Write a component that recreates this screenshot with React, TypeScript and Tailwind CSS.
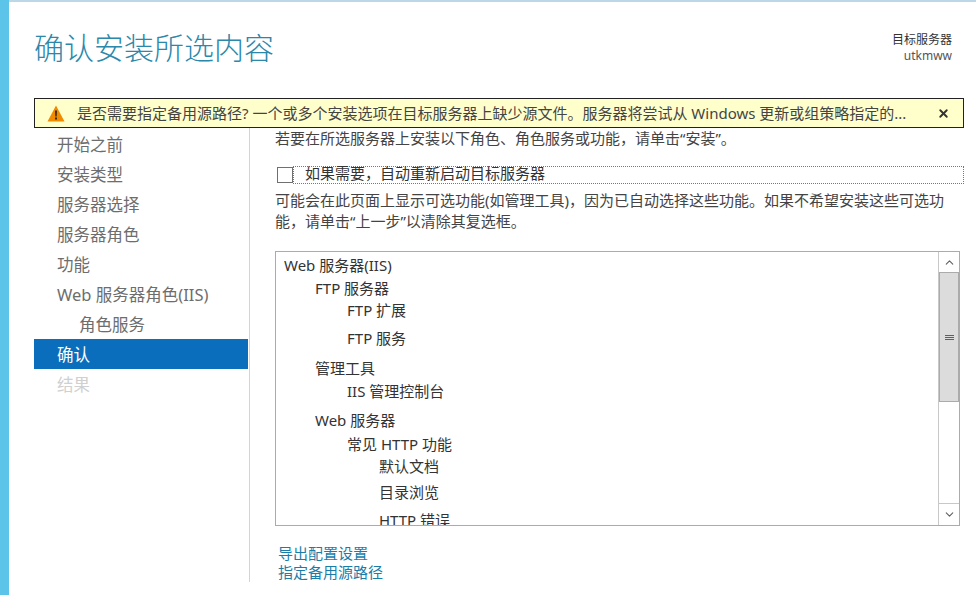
import { ChevronDown, ChevronUp, X } from 'lucide-react';

const font = 'font-["Noto_Sans","Noto_Sans_CJK_SC",sans-serif]';

const steps = [
  { label: '开始之前', cls: 'pl-[23px] text-[#6d6d6d]' },
  { label: '安装类型', cls: 'pl-[23px] text-[#6d6d6d]' },
  { label: '服务器选择', cls: 'pl-[23px] text-[#6d6d6d]' },
  { label: '服务器角色', cls: 'pl-[23px] text-[#6d6d6d]' },
  { label: '功能', cls: 'pl-[23px] text-[#6d6d6d]' },
  { label: 'Web 服务器角色(IIS)', cls: 'pl-[23px] text-[#6d6d6d]' },
  { label: '角色服务', cls: 'pl-[45px] text-[#6d6d6d]' },
  { label: '确认', cls: 'pl-[23px] bg-[#0a6ebd] text-white' },
  { label: '结果', cls: 'pl-[23px] text-[#d0d0d0]' },
];

const tree = [
  { label: 'Web 服务器(IIS)', cls: 'pl-[8px]' },
  { label: 'FTP 服务器', cls: 'mt-[3px] pl-[39px]' },
  { label: 'FTP 扩展', cls: 'mt-[2px] pl-[71px]' },
  { label: 'FTP 服务', cls: 'mt-[8px] pl-[71px]' },
  { label: '管理工具', cls: 'mt-[10px] pl-[39px]' },
  { label: 'IIS 管理控制台', cls: 'mt-[3px] pl-[71px]' },
  { label: 'Web 服务器', cls: 'mt-[9px] pl-[39px]' },
  { label: '常见 HTTP 功能', cls: 'mt-[4px] pl-[71px]' },
  { label: '默认文档', cls: 'mt-[2px] pl-[103px]' },
  { label: '目录浏览', cls: 'mt-[6px] pl-[103px]' },
  { label: 'HTTP 错误', cls: 'mt-[8px] pl-[103px]' },
];

function WarningIcon() {
  return (
    <svg viewBox="0 0 18 17" className="ml-[12px] h-[17px] w-[18px] shrink-0">
      <path d="M9 0.5 L17.5 16.5 H0.5 Z" fill="#f08a00" />
      <path d="M8 5.5 H10 L9.7 11.5 H8.3 Z M8 12.5 H10 V14.5 H8 Z" fill="#3a2a10" />
    </svg>
  );
}

export default function App() {
  return (
    <div className={`flex h-[595px] w-[976px] overflow-hidden bg-white ${font}`}>
      {/* Window edge */}
      <div className="w-[9px] shrink-0 bg-[#5cc4e8]" />

      <div className="flex min-w-0 flex-1 flex-col border-t-[2px] border-[#bcd8e6] pl-[25px] pr-[12px]">
        {/* Header */}
        <div className="flex h-[96px] shrink-0 items-start justify-between">
          <h1 className="mt-[24px] text-[30px] leading-[44px] font-light text-[#2b88ab]">确认安装所选内容</h1>
          <div className="mr-[12px] mt-[30px] text-right text-[12px] leading-[16px] text-[#333333]">
            <div>目标服务器</div>
            <div className="text-[#555555]">utkmww</div>
          </div>
        </div>

        {/* Warning banner */}
        <div className="flex h-[30px] shrink-0 items-center border border-[#222222] bg-[#ffffcc] text-[15px] text-[#444444]">
          <WarningIcon />
          <span className="ml-[12px] w-[834px] shrink-0 truncate">
            是否需要指定备用源路径? 一个或多个安装选项在目标服务器上缺少源文件。服务器将尝试从 Windows 更新或组策略指定的...
          </span>
          <X className="ml-[26px] h-[13px] w-[13px] shrink-0 text-[#333333]" strokeWidth={3.5} />
        </div>

        <div className="flex min-h-0 flex-1">
          {/* Steps */}
          <div className="w-[214px] shrink-0 pt-[1px]">
            {steps.map((s) => (
              <div key={s.label} className={`flex h-[30px] items-center pt-[2px] text-[16.5px] ${s.cls}`}>
                {s.label}
              </div>
            ))}
          </div>

          {/* Content */}
          <div className="mb-[13px] ml-[1px] flex min-w-0 flex-1 flex-col border-l-[1px] border-[#d4d4d4] pl-[25px]">
            <p className="text-[15px] leading-[21px] text-[#444444]">若要在所选服务器上安装以下角色、角色服务或功能，请单击“安装”。</p>

            <div className="mt-[17px] flex h-[18px] items-center">
              <div className="ml-[2px] h-[16px] w-[16px] shrink-0 border border-[#707070]" />
              <div className="flex h-[18px] flex-1 items-center border border-dotted border-[#777777] pb-[3px] pl-[11px] text-[15px] text-[#333333]">
                如果需要，自动重新启动目标服务器
              </div>
            </div>

            <p className="mt-[6px] text-[15px] leading-[21px] text-[#444444]">
              可能会在此页面上显示可选功能(如管理工具)，因为已自动选择这些功能。如果不希望安装这些可选功能，请单击“上一步”以清除其复选框。
            </p>

            {/* List */}
            <div className="mr-[4px] mt-[19px] flex h-[275px] shrink-0 border border-[#ababab]">
              <div className="min-w-0 flex-1 overflow-hidden pt-[3px] text-[15px] text-[#333333]">
                {tree.map((t) => (
                  <div key={t.label} className={`flex h-[20px] shrink-0 items-center ${t.cls}`}>
                    {t.label}
                  </div>
                ))}
              </div>
              <div className="flex w-[21px] shrink-0 flex-col border-l border-[#c8c8c8]">
                <div className="flex h-[20px] items-center justify-center">
                  <ChevronUp className="h-[13px] w-[13px] text-[#606060]" strokeWidth={2} />
                </div>
                <div className="flex h-[130px] flex-col items-center justify-center gap-[1px] border border-[#ababab] bg-[#dcdcdc]">
                  <div className="h-[1px] w-[9px] bg-[#606060]" />
                  <div className="h-[1px] w-[9px] bg-[#606060]" />
                  <div className="h-[1px] w-[9px] bg-[#606060]" />
                </div>
                <div className="flex-1" />
                <div className="flex h-[22px] items-center justify-center border-t border-[#c8c8c8]">
                  <ChevronDown className="h-[13px] w-[13px] text-[#606060]" strokeWidth={2} />
                </div>
              </div>
            </div>

            {/* Links */}
            <div className="mt-[18px] pl-[3px] text-[15px] leading-[19px] text-[#1a7da8]">
              <div>导出配置设置</div>
              <div>指定备用源路径</div>
            </div>
          </div>
        </div>
      </div>
    </div>
  );
}
